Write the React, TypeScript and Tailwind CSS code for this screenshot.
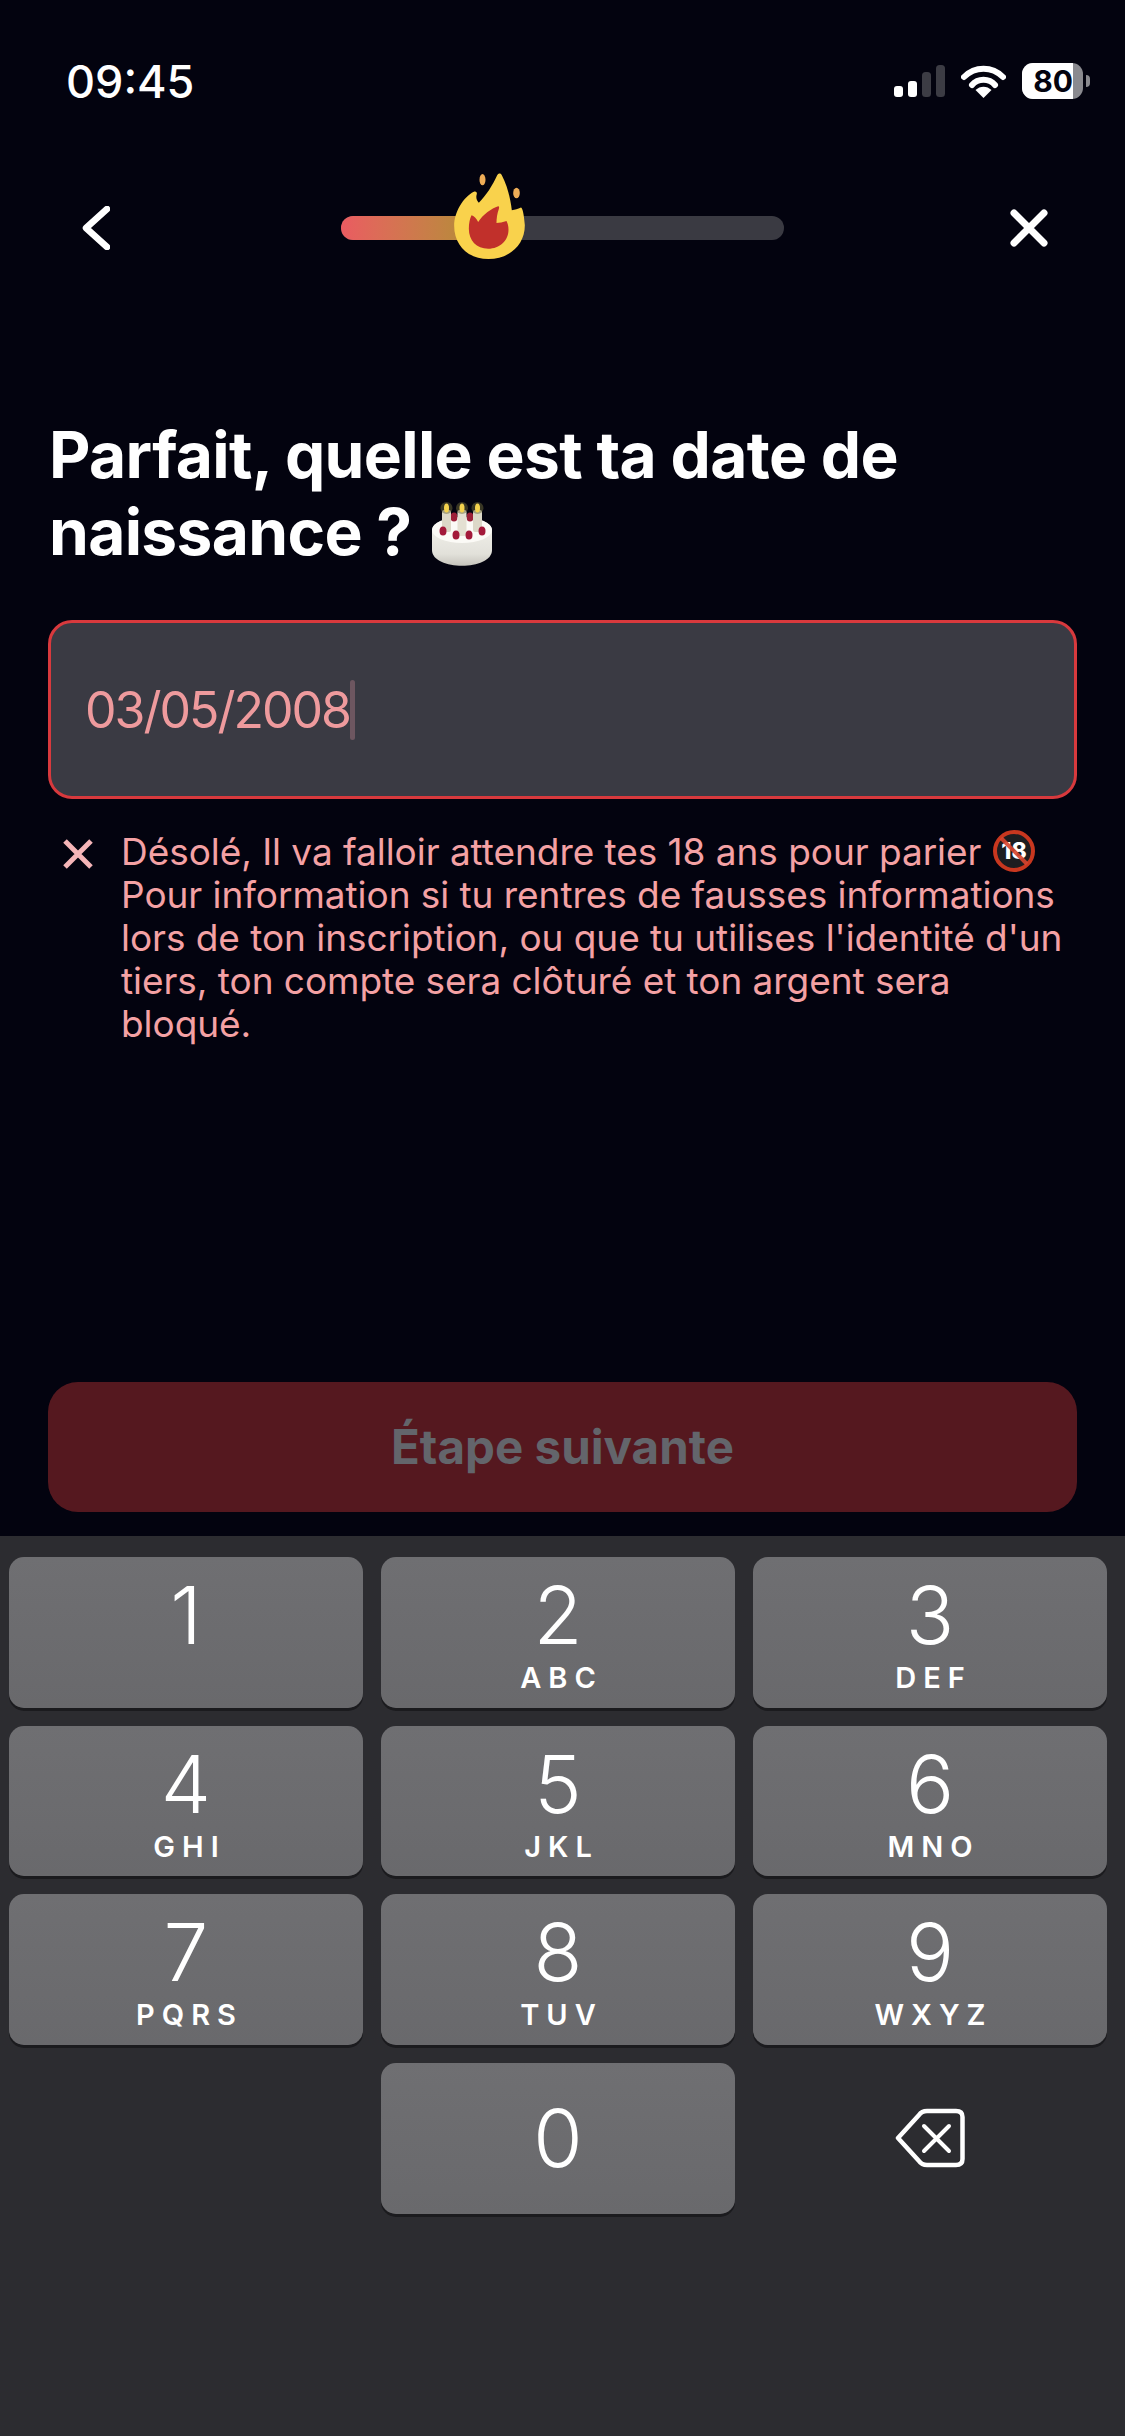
const keys = [
  { digit: "1", letters: "" },
  { digit: "2", letters: "ABC" },
  { digit: "3", letters: "DEF" },
  { digit: "4", letters: "GHI" },
  { digit: "5", letters: "JKL" },
  { digit: "6", letters: "MNO" },
  { digit: "7", letters: "PQRS" },
  { digit: "8", letters: "TUV" },
  { digit: "9", letters: "WXYZ" },
]

function Key({ digit, letters, centered }: { digit: string; letters: string; centered?: boolean }) {
  return (
    <div
      className={
        centered
          ? "flex flex-col items-center justify-center rounded-[15px] bg-gradient-to-b from-[#6f6f72] to-[#69696c] text-white shadow-[0_3px_0_#1b1b1e]"
          : "flex flex-col items-center rounded-[15px] bg-gradient-to-b from-[#6f6f72] to-[#69696c] pt-[18px] text-white shadow-[0_3px_0_#1b1b1e]"
      }
    >
      <span className="text-[80px] leading-[80px] font-light">{digit}</span>
      {letters && <span className="mt-[8px] pl-[7px] text-[29px] leading-[29px] font-semibold tracking-[7px]">{letters}</span>}
    </div>
  )
}

function StatusIcons() {
  return (
    <div className="flex items-center">
      {/* Signal bars */}
      <svg width="51" height="32" viewBox="0 0 51 32">
        <rect x="0" y="21" width="9" height="11" rx="3" fill="#fff" />
        <rect x="14" y="16" width="9" height="16" rx="3" fill="#fff" />
        <rect x="28" y="7" width="9" height="25" rx="3.5" fill="#3c3c44" />
        <rect x="42" y="0" width="9" height="32" rx="3.5" fill="#3c3c44" />
      </svg>
      {/* Wifi */}
      <svg className="ml-[16px]" width="45" height="33" viewBox="0 0 45 33" fill="none">
        <path d="M3 12 C14 1 31 1 42 12" stroke="#fff" stroke-width="6" stroke-linecap="round" />
        <path d="M11 20 C17 13 28 13 34 20" stroke="#fff" stroke-width="6" stroke-linecap="round" />
        <path d="M22.5 33 L14.5 25 C19 20.5 26 20.5 30.5 25 Z" fill="#fff" />
      </svg>
      {/* Battery */}
      <div className="ml-[16px] flex h-[36px] w-[61px] overflow-hidden rounded-[11px] bg-[#8a8a8f]">
        <div className="flex h-full w-[51px] items-center justify-end bg-white text-[30px] leading-none font-bold text-[#03030f]">80</div>
      </div>
      <div className="ml-[3px] h-[12px] w-[4px] rounded-r-full bg-[#8a8a8f]" />
    </div>
  )
}

function Flame() {
  return (
    <svg className="absolute top-[-43px] left-[113px]" width="71" height="86" viewBox="463 68 212 258">
      <ellipse cx="548" cy="88" rx="9" ry="17" fill="#eead57" />
      <ellipse cx="650" cy="128" rx="10" ry="16" fill="#eead57" />
      <path
        d="M566 326 C505 326 463 285 463 226 C463 185 490 140 522 124 C530 121 533 128 530 135 C528 145 532 152 537 157 C560 135 578 105 592 75 C596 68 603 68 606 75 C622 105 632 145 636 180 C645 178 655 175 662 172 C668 170 672 190 675 225 C675 285 628 326 566 326 Z"
        fill="#f9d24c"
      />
      <path
        d="M565 295 C530 295 507 270 507 235 C507 220 510 205 515 195 C522 197 530 205 535 215 C550 192 575 175 595 168 C599 168 598 172 597 176 C592 190 590 205 590 218 C598 218 610 216 620 212 C624 220 626 228 626 238 C626 270 600 295 565 295 Z"
        fill="#c1302b"
      />
    </svg>
  )
}

function CakeEmoji() {
  return (
    <svg className="ml-[20px] inline-block align-[-11px]" width="60" height="66" viewBox="0 0 60 66">
      <defs>
        <linearGradient id="cakeSide" x1="0" y1="0" x2="0" y2="1">
          <stop offset="0" stop-color="#f5f4ef" />
          <stop offset="0.75" stop-color="#e2e1da" />
          <stop offset="1" stop-color="#c6c4bc" />
        </linearGradient>
      </defs>
      <path d="M0 30 C0 14 60 14 60 30 L60 50 C60 71 0 71 0 50 Z" fill="url(#cakeSide)" />
      <ellipse cx="30" cy="30" rx="30" ry="13" fill="#fbfaf6" />
      <ellipse cx="22" cy="17" rx="3.5" ry="4.5" fill="#9c1f38" />
      <ellipse cx="38" cy="17" rx="3.5" ry="4.5" fill="#9c1f38" />
      <rect x="10" y="10" width="9" height="22" rx="2" fill="#dcd8c8" />
      <rect x="25.5" y="10" width="9" height="26" rx="2" fill="#e4e0d2" />
      <rect x="41" y="10" width="9" height="22" rx="2" fill="#dcd8c8" />
      <circle cx="14.5" cy="8" r="6" fill="#6d6a3a" opacity="0.5" />
      <circle cx="30" cy="8" r="6" fill="#6d6a3a" opacity="0.5" />
      <circle cx="45.5" cy="8" r="6" fill="#6d6a3a" opacity="0.5" />
      <ellipse cx="14.5" cy="8" rx="2.5" ry="4.5" fill="#f4d24e" />
      <ellipse cx="30" cy="8" rx="2.5" ry="4.5" fill="#f4d24e" />
      <ellipse cx="45.5" cy="8" rx="2.5" ry="4.5" fill="#f4d24e" />
      <ellipse cx="11" cy="31" rx="3.5" ry="4.5" fill="#a3193a" />
      <ellipse cx="24" cy="35" rx="3.5" ry="4.5" fill="#a3193a" />
      <ellipse cx="37" cy="35" rx="3.5" ry="4.5" fill="#a3193a" />
      <ellipse cx="50" cy="31" rx="3.5" ry="4.5" fill="#a3193a" />
    </svg>
  )
}

function NoUnder18Emoji() {
  return (
    <svg className="ml-[12px] inline-block align-[-7px]" width="42" height="42" viewBox="0 0 42 42">
      <circle cx="21" cy="21" r="19" fill="#1d1d20" stroke="#c8371f" stroke-width="4" />
      <text x="21" y="29" text-anchor="middle" font-family="Inter, sans-serif" font-size="23" font-weight="800" fill="#fff">18</text>
      <path d="M8 8 L34 34" stroke="#d8452f" stroke-width="4" opacity="0.9" />
    </svg>
  )
}

export default function App() {
  return (
    <div className="flex h-[2436px] w-[1125px] flex-col overflow-hidden bg-[#03030f] font-[Inter,sans-serif]">
      {/* Status bar */}
      <div className="mt-[57px] flex h-[48px] items-center justify-between pr-[35px] pl-[66px]">
        <span className="text-[45px] leading-none font-medium text-white">09:45</span>
        <StatusIcons />
      </div>

      {/* Nav with progress */}
      <div className="mt-[101px] flex h-[43px] items-center pl-[82px]">
        <svg width="28" height="44" viewBox="0 0 28 44" fill="none">
          <path d="M25 3 L4 22 L25 41" stroke="#fff" stroke-width="6.5" stroke-linecap="round" stroke-linejoin="round" />
        </svg>
        <div className="relative ml-[231px] h-[24px] w-[443px] rounded-full bg-[#3a3a42]">
          <div className="h-full w-[140px] rounded-l-full bg-gradient-to-r from-[#ea5b61] to-[#b08e33]" />
          <Flame />
        </div>
        <svg className="ml-[226px]" width="38" height="38" viewBox="0 0 38 38" fill="none">
          <path d="M4 4 L34 34 M34 4 L4 34" stroke="#fff" stroke-width="7" stroke-linecap="round" />
        </svg>
      </div>

      {/* Title */}
      <h1 className="mt-[167px] pl-[49px] text-[64px] leading-[77px] font-bold tracking-[-0.66px] text-white">
        Parfait, quelle est ta date de
        <br />
        naissance ?
        <CakeEmoji />
      </h1>

      {/* Date field */}
      <div className="mx-[48px] mt-[50px] flex h-[179px] items-center rounded-[24px] border-[3px] border-[#d8393d] bg-[#3a3a43] pl-[34px]">
        <span className="text-[50px] leading-none tracking-[-2px] text-[#ee9a9d]">03/05/2008</span>
        <span className="h-[60px] w-[5px] rounded-full bg-[#6d5660]" />
      </div>

      {/* Error message */}
      <div className="mt-[31px] flex pr-[45px] pl-[62px]">
        <svg className="mt-[9px] shrink-0" width="32" height="30" viewBox="0 0 32 30" fill="none">
          <path d="M3 2 L29 28 M29 2 L3 28" stroke="#f5b5b8" stroke-width="5" />
        </svg>
        <p className="ml-[27px] text-[37px] leading-[43px] tracking-[-0.05px] text-[#f4a1a4]">
          Désolé, Il va falloir attendre tes 18 ans pour parier
          <NoUnder18Emoji />
          <br />
          Pour information si tu rentres de fausses informations lors de ton inscription, ou que tu utilises l'identité d'un tiers, ton compte sera clôturé et ton argent sera bloqué.
        </p>
      </div>

      {/* Submit */}
      <div className="mx-[48px] mt-auto mb-[24px] flex h-[130px] items-center justify-center rounded-[30px] bg-[#55181f] text-[47.5px] font-bold text-[#63656b]">
        Étape suivante
      </div>

      {/* Numeric keypad */}
      <div className="h-[900px] bg-[#2c2c30] pt-[21px] pr-[18px] pl-[9px]">
        <div className="grid auto-rows-[150.67px] grid-cols-3 gap-x-[18px] gap-y-[18px]">
          {keys.map((key) => (
            <Key key={key.digit} digit={key.digit} letters={key.letters} />
          ))}
          <div />
          <Key digit="0" letters="" centered />
          <div className="flex items-center justify-center">
            <svg width="70" height="60" viewBox="0 0 70 60" fill="none">
              <path
                d="M3 30 L24 7 C26 4 28 3 32 3 L61 3 C65 3 67.5 5 67.5 9 L67.5 51 C67.5 55 65 57 61 57 L32 57 C28 57 26 56 24 53 Z"
                stroke="#fff"
                stroke-width="4.5"
                stroke-linejoin="round"
              />
              <path d="M29 18 L54 43 M54 18 L29 43" stroke="#fff" stroke-width="4" stroke-linecap="round" />
            </svg>
          </div>
        </div>
      </div>
    </div>
  )
}
